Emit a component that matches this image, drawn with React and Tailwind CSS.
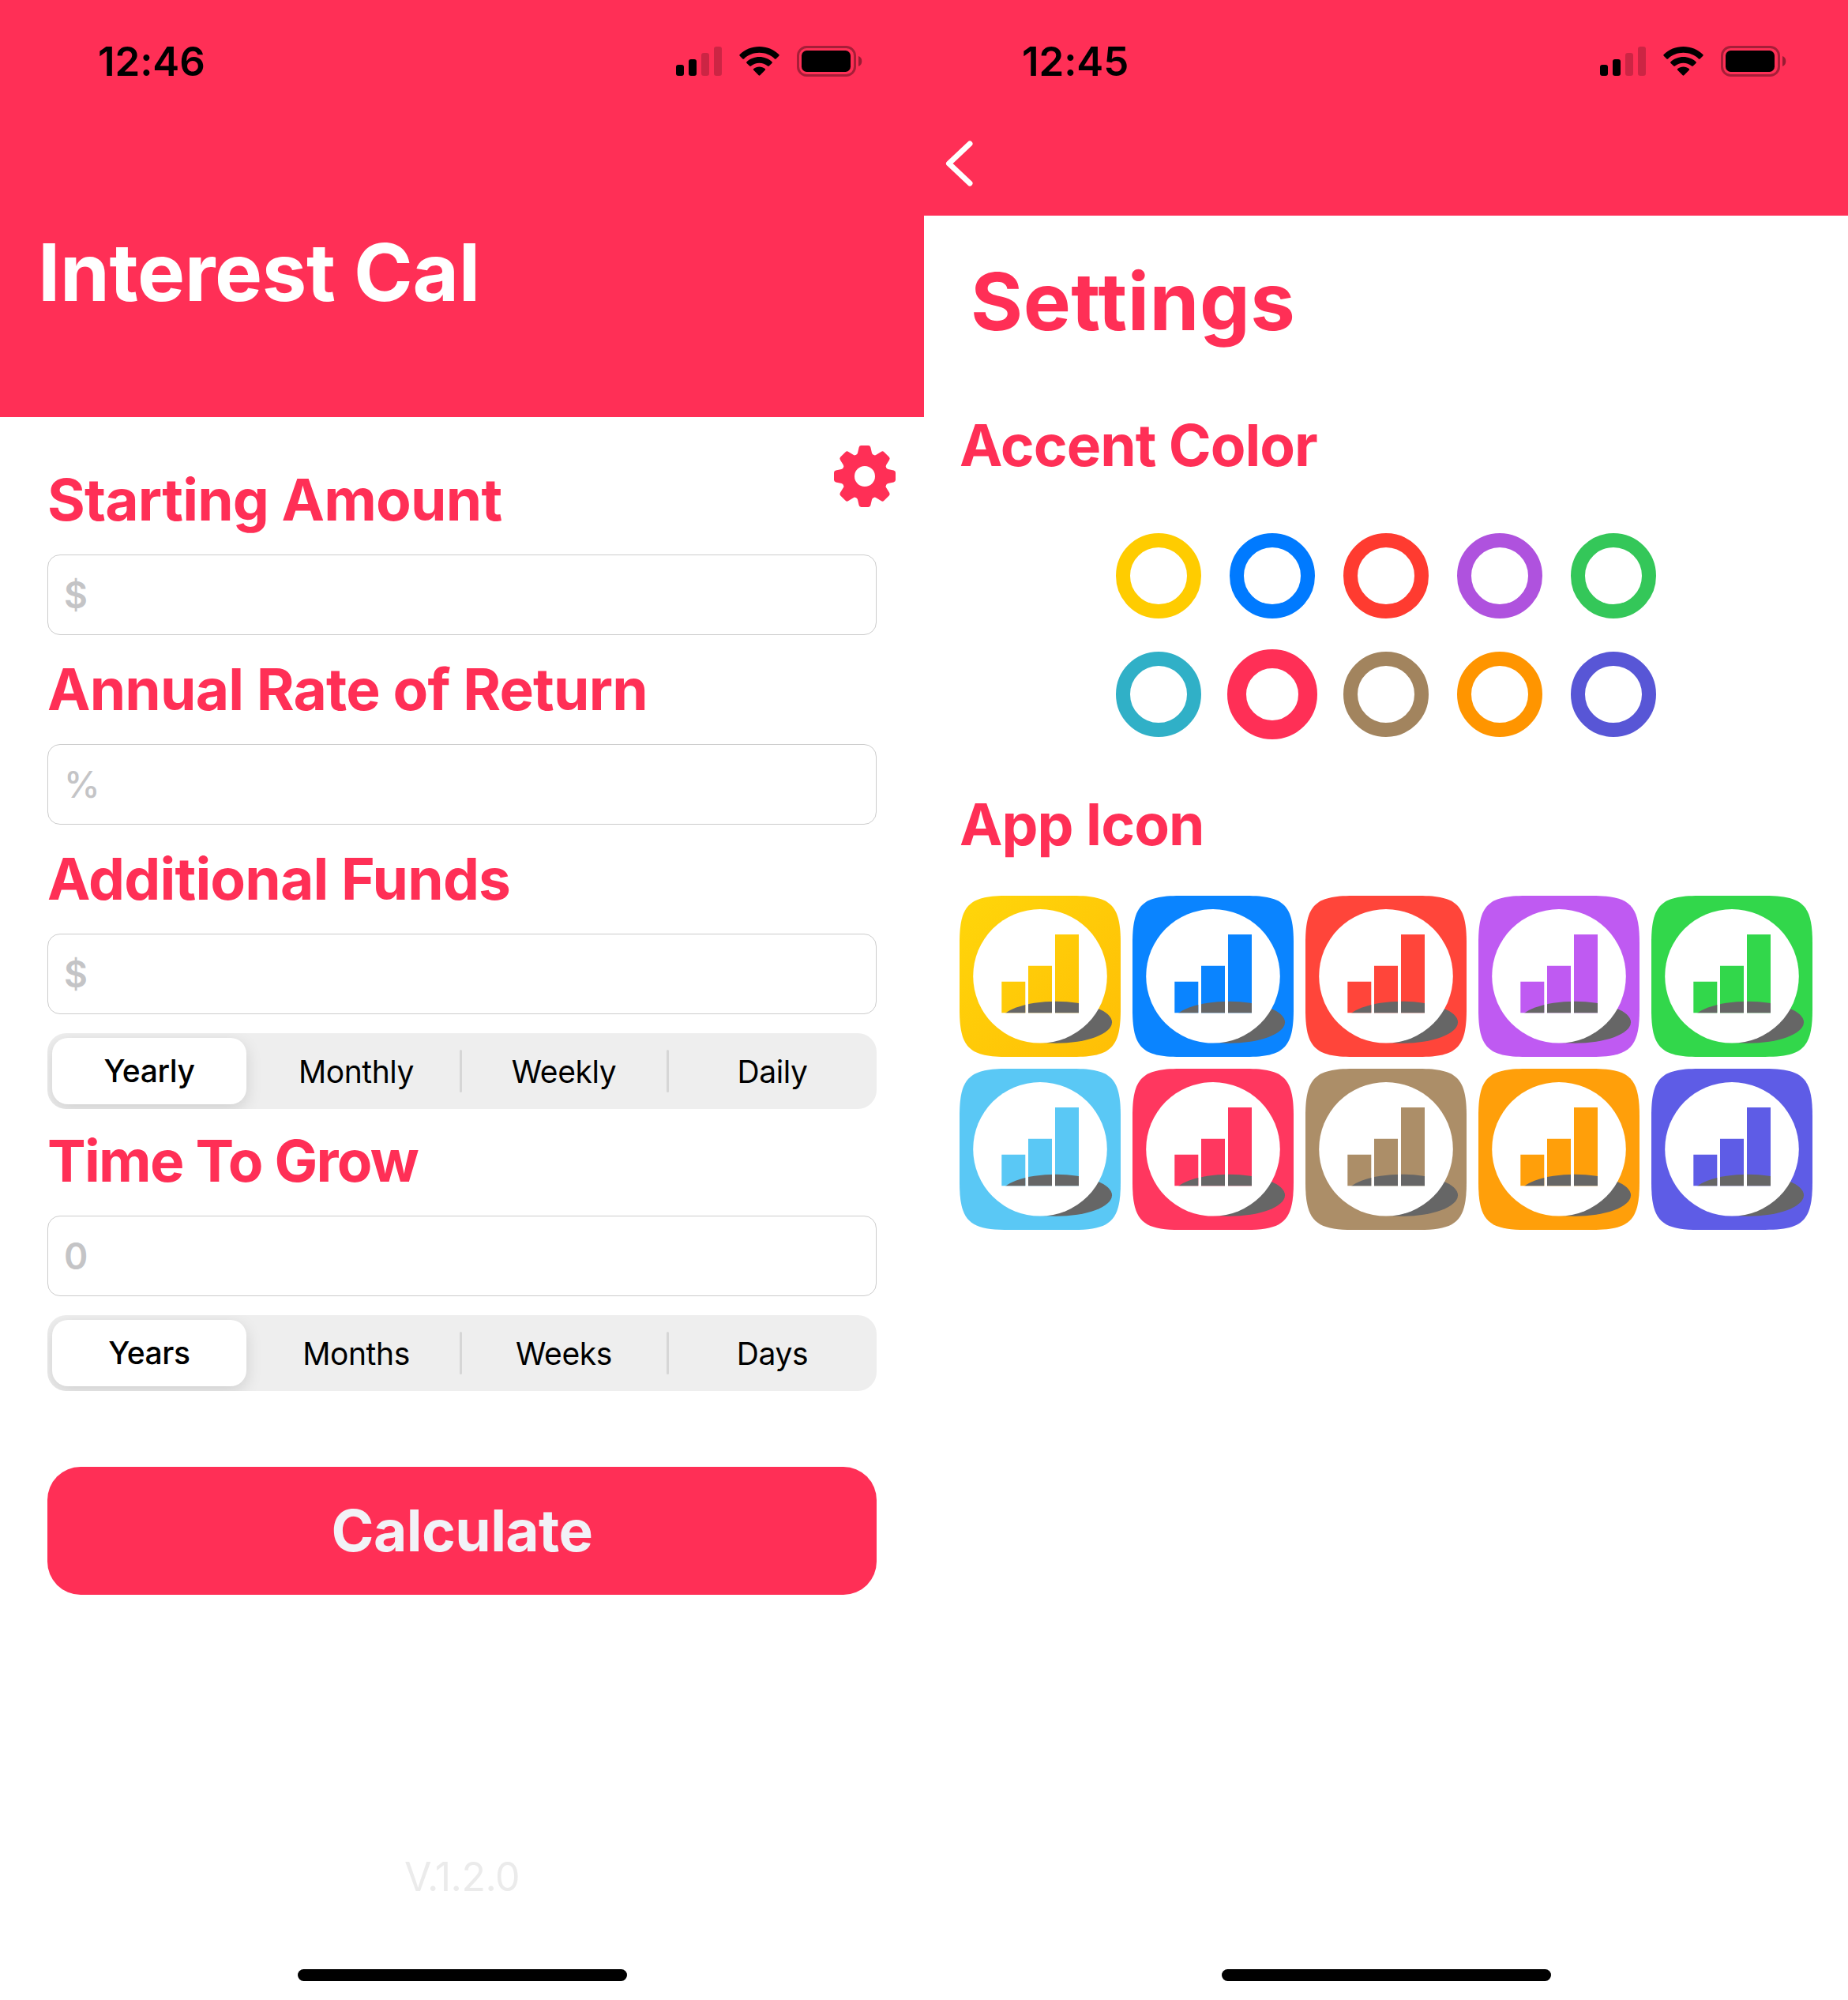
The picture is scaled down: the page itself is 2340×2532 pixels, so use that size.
import React, { useState } from 'react';

const SIGNAL_BARS = [
    { x: 0, y: 24, h: 14, on: true },
    { x: 16, y: 17, h: 21, on: true },
    { x: 32, y: 9, h: 29, on: false },
    { x: 48, y: 1, h: 37, on: false },
];

const ACCENTS = [
    '#ffcc00', '#007aff', '#ff3b30', '#af52de', '#34c759',
    '#30b0c7', '#ff2f56', '#a2845e', '#ff9500', '#5856d6',
];

const APP_ICONS = [
    { id: 'yellow', from: '#ffd60a', to: '#ffbe06' },
    { id: 'blue', from: '#0a84ff', to: '#0a84ff' },
    { id: 'red', from: '#ff453a', to: '#ff453a' },
    { id: 'purple', from: '#bf5af2', to: '#bf5af2' },
    { id: 'green', from: '#32d74b', to: '#32d74b' },
    { id: 'cyan', from: '#5ac8f5', to: '#5ac8f5' },
    { id: 'pink', from: '#ff375f', to: '#ff375f' },
    { id: 'brown', from: '#ac8e68', to: '#ac8e68' },
    { id: 'orange', from: '#ff9f0a', to: '#ff9f0a' },
    { id: 'indigo', from: '#5e5ce6', to: '#5e5ce6' },
];

const StatusBar = ({ time }) => (
    <div className="h-[156px] pl-[124px] pr-[78px] flex items-center justify-between text-black">
        <span className="text-[51px] leading-[60px] font-semibold tracking-[-0.1px]">{time}</span>
        <div className="flex items-center gap-[22px]">
            <svg width="58" height="40" viewBox="0 0 58 40">
                {SIGNAL_BARS.map((bar) => (
                    <rect key={bar.x} x={bar.x} y={bar.y} width="10" height={bar.h} rx="3" fillOpacity={bar.on ? 1 : 0.2} />
                ))}
            </svg>
            <svg width="51" height="40" viewBox="0 0 51 40">
                <path d="M25.5 1C35 1 43.800 4.700 50.300 10.900Q51.200 11.800 50.300 12.700L46.600 16.400Q45.800 17.200 44.900 16.400C39.600 11.500 32.800 8.800 25.500 8.800S11.400 11.500 6.100 16.400Q5.200 17.200 4.400 16.400L0.700 12.700Q-0.200 11.800 0.700 10.900C7.200 4.700 16 1 25.500 1Z" />
                <path d="M25.500 14C31.500 14 37.200 16.300 41.500 20.200Q42.400 21.100 41.500 22L37.800 25.600Q36.900 26.400 36 25.600C33.100 23.100 29.400 21.700 25.500 21.700S17.900 23.100 15 25.600Q14.100 26.400 13.200 25.600L9.500 22Q8.600 21.100 9.500 20.200C13.800 16.300 19.500 14 25.500 14Z" />
                <path d="M25.500 26.500C28.200 26.500 30.700 27.400 32.700 29Q33.700 29.900 32.800 30.800L26.400 37.200Q25.500 38.100 24.600 37.200L18.200 30.800Q17.300 29.900 18.300 29C20.300 27.400 22.800 26.500 25.500 26.500Z" />
            </svg>
            <svg width="83" height="40" viewBox="0 0 83 40">
                <rect x="1.500" y="1.500" width="72" height="36" rx="11" fill="none" stroke="#000" strokeWidth="3" strokeOpacity="0.35" />
                <rect x="6" y="6" width="62" height="27" rx="6.500" />
                <path d="M78 13C81 14 82.300 16.500 82.300 19.500S81 25 78 26Z" fillOpacity="0.4" />
            </svg>
        </div>
    </div>
);

const GearIcon = () => (
    <svg width="78" height="78" viewBox="-39 -39 78 78" fill="#ff2f56">
        <circle r="21" fill="none" stroke="#ff2f56" strokeWidth="16" />
        {[0, 45, 90, 135, 180, 225, 270, 315].map((angle) => (
            <path
                key={angle}
                transform={`rotate(${angle})`}
                d="M-12 -24L-12 -26.500Q-9.400 -27.300 -9 -29.500L-7.400 -36.600Q-6.800 -39 -4.500 -39L4.500 -39Q6.800 -39 7.400 -36.600L9 -29.500Q9.400 -27.300 12 -26.500L12 -24Z"
            />
        ))}
    </svg>
);

const AppIcon = ({ id, from, to }) => (
    <svg width="204" height="204" viewBox="0 0 204 204">
        <defs>
            <linearGradient id={`${id}-fill`} gradientUnits="userSpaceOnUse" x1="0" y1="0" x2="204" y2="204">
                <stop offset="0" stopColor={from} />
                <stop offset="1" stopColor={to} />
            </linearGradient>
            <clipPath id={`${id}-bars`}>
                <path d="M53.300 108.700h30v39.600h-30zM87 88.700h30v59.600h-30zM121 49h30v99.300h-30z" />
            </clipPath>
        </defs>
        <path
            d="M60 0H144C192 0 204 12 204 60V144C204 192 192 204 144 204H60C12 204 0 192 0 144V60C0 12 12 0 60 0Z"
            fill={`url(#${id}-fill)`}
        />
        <ellipse cx="122" cy="160.200" rx="71" ry="26.500" fill="#666" />
        <circle cx="102" cy="101.800" r="84.800" fill="#fff" />
        <g clipPath={`url(#${id}-bars)`}>
            <rect x="50" y="45" width="105" height="105" fill={`url(#${id}-fill)`} />
            <ellipse cx="122" cy="160.200" rx="71" ry="26.500" fill="#666" />
        </g>
    </svg>
);

const Field = ({ label, placeholder, tracking = 'tracking-[-0.8px]', weight = 'font-semibold' }) => (
    <label className="block">
        <span className={`block text-[73px] leading-[90px] font-bold text-[#ff2f56] whitespace-nowrap ${tracking}`}>{label}</span>
        <input
            type="text"
            placeholder={placeholder}
            className={`block mt-6 w-full h-[102px] rounded-[16px] border border-[#cccccc] bg-white px-5 text-[46px] placeholder:text-[#c4c4c6] placeholder:opacity-100 ${weight}`}
        />
    </label>
);

const Segmented = ({ options }) => {
    const [selected, setSelected] = useState(0);

    return (
        <div className="mt-6 h-24 grid grid-cols-[258px_264px_262px_266px] rounded-[24px] bg-[#eeeeee] overflow-hidden text-[39px] tracking-[-0.4px] text-black">
            {options.map((option, i) => (
                <button key={option} onClick={() => setSelected(i)} className="relative flex items-center justify-center">
                    {i > 1 && <span className="absolute left-0 top-[21px] w-[3px] h-[54px] rounded-full bg-[#d6d6d6]" />}
                    {i === selected ? (
                        <span className="w-[246px] h-[84px] pt-px rounded-[20px] bg-white font-medium flex items-center justify-center shadow-[0_6px_20px_rgba(0,0,0,0.13)]">
                            {option}
                        </span>
                    ) : (
                        <span className="pl-[2px] pt-[2px]">{option}</span>
                    )}
                </button>
            ))}
        </div>
    );
};

const HomeIndicator = () => <div className="mx-auto mb-6 w-[417px] h-[15px] rounded-full bg-black" />;

const CalculatorScreen = () => (
    <section className="w-[1170px] h-full flex flex-col bg-white">
        <header className="h-[528px] bg-[#ff2f56]">
            <StatusBar time="12:46" />
            <h1 className="mt-[127px] ml-[48px] text-[101px] leading-[122px] font-bold tracking-[-0.4px] text-white whitespace-nowrap">Interest Cal</h1>
        </header>

        <main className="relative flex-1 px-[60px] pt-[60px]">
            <button className="absolute top-[36px] right-[36px]">
                <GearIcon />
            </button>

            <Field label="Starting Amount" placeholder="$" />
            <div className="mt-6"><Field label="Annual Rate of Return" placeholder="%" weight="font-medium" /></div>
            <div className="mt-6"><Field label="Additional Funds" placeholder="$" /></div>
            <Segmented options={['Yearly', 'Monthly', 'Weekly', 'Daily']} />
            <div className="mt-[21px]"><Field label="Time To Grow" placeholder="0" tracking="tracking-[-1.7px]" /></div>
            <Segmented options={['Years', 'Months', 'Weeks', 'Days']} />

            <button className="mt-24 w-full h-[162px] rounded-[42px] bg-[#ff2f56] text-[73px] font-bold tracking-[-0.6px] text-[#f2f2f7]">
                Calculate
            </button>
        </main>

        <p className="mb-[87px] text-center text-[50px] leading-[60px] tracking-[-0.5px] text-[#ebebeb]">V.1.2.0</p>
        <HomeIndicator />
    </section>
);

const SettingsScreen = () => (
    <section className="w-[1170px] h-full flex flex-col bg-white">
        <header className="h-[273px] bg-[#ff2f56]">
            <StatusBar time="12:45" />
            <button className="mt-[21px] ml-[27px] block">
                <svg width="36" height="60" viewBox="0 0 36 60" fill="none" stroke="#fff" strokeWidth="7" strokeLinecap="round" strokeLinejoin="round">
                    <path d="M31 5L4.500 30L31 55" />
                </svg>
            </button>
        </header>

        <main className="flex-1 px-[45px]">
            <h1 className="mt-[47px] ml-[14px] text-[101px] leading-[122px] font-bold tracking-[0.5px] text-[#ff2f56]">Settings</h1>

            <h2 className="mt-[77px] text-[73px] leading-[90px] font-bold tracking-[-1px] text-[#ff2f56]">Accent Color</h2>
            <div className="mt-[66px] grid grid-cols-[repeat(5,108px)] justify-center gap-x-9 gap-y-[42px]">
                {ACCENTS.map((color) => (
                    <svg key={color} width="108" height="108" viewBox="-54 -54 108 108" className="overflow-visible">
                        <circle r="45" fill="none" stroke={color} strokeWidth={color === '#ff2f56' ? 24 : 18} />
                    </svg>
                ))}
            </div>

            <h2 className="mt-[66px] text-[73px] leading-[90px] font-bold tracking-[-1px] text-[#ff2f56]">App Icon</h2>
            <div className="mt-[45px] grid grid-cols-[repeat(5,204px)] gap-[15px]">
                {APP_ICONS.map((icon) => (
                    <AppIcon key={icon.id} {...icon} />
                ))}
            </div>
        </main>

        <HomeIndicator />
    </section>
);

const App = () => (
    <div className="w-[2340px] h-[2532px] flex overflow-hidden bg-white font-[Inter,'Liberation_Sans',sans-serif]">
        <CalculatorScreen />
        <SettingsScreen />
    </div>
);

export default App;
